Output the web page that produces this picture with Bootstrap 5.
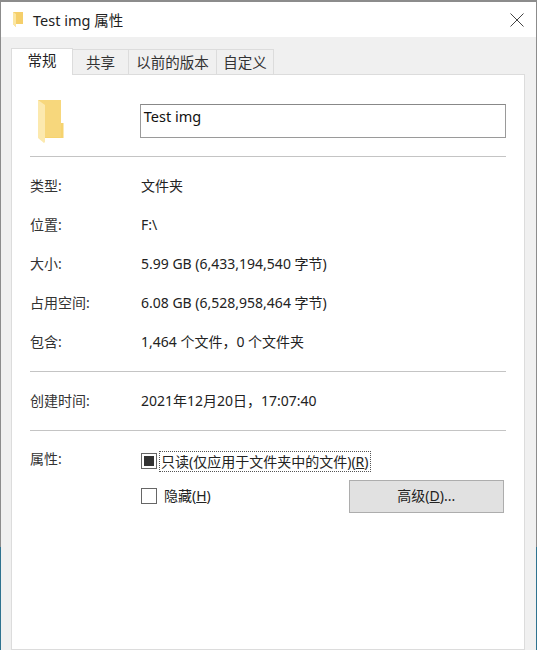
<!DOCTYPE html>
<html lang="zh-CN">
<head>
<meta charset="utf-8">
<title>Test img 属性</title>
<link rel="stylesheet" href="https://cdn.jsdelivr.net/npm/bootstrap@5.3.0/dist/css/bootstrap.min.css">
<style>
html,body{height:650px;overflow:hidden;margin:0;background:#fff}
body{font-family:"Noto Sans","Noto Sans CJK SC",sans-serif;font-size:14px;color:#222;line-height:20px}
.win-frame{width:537px;height:650px;padding:2px 1px 0 1px;background:linear-gradient(to bottom,#8c8c8c 0,#8c8c8c 547px,#2f7390 547px,#2f7390 650px)}
.win-inner{height:648px;background:#f0f0f0}
.title-bar{height:35px;background:#fff;padding-left:11px}
.title-text{font-size:14.5px;margin-left:9px;color:#222}
.close-x{margin-right:12px}
.tab-strip{height:37px;padding:11px 0 0 10px;align-items:flex-end}
.tab-item{height:25px;background:#f0f0f0;border:1px solid #dcdcdc;border-bottom:0;border-left:0;color:#333;font-size:14.5px;text-align:center;line-height:24px}
.tab-on{height:27px;width:62px;background:#fff;border:1px solid #dcdcdc;border-bottom:0;color:#222;position:relative;top:1px;line-height:23px;z-index:1}
.panel-box{margin:0 11px 0 10px;height:576px;background:#fff;border:1px solid #dcdcdc;padding:0 18px}
.head-row{height:81px}
.folder-cell{width:110px;padding-left:7px;padding-top:24px}
.name-box{width:367px;height:34px;margin-top:29px;border:1px solid #9a9a9a;border-top-color:#888;padding:1px 3px;font-size:14.5px;color:#111}
.rule-line{height:1px;border-top:1px solid #c4c4c4;opacity:1;margin:0}
.info-row{height:39px;align-items:center}
.info-key{width:111px;color:#333}
.info-val{color:#222}
.rows-top{padding-top:9px;padding-bottom:10px}
.rows-one{padding:9px 0 10px}
.attr-wrap{padding-top:9px}
.attr-key{width:111px;padding-top:9px;color:#333}
.attr-check{width:16px;height:16px;border:1px solid #666;background:#fff;flex:none;margin-right:3px;display:flex;align-items:center;justify-content:center}
.attr-check i{display:block;width:10px;height:10px;background:#333}
.attr-focus{outline:1px dotted #555;outline-offset:0;padding:0 1px;white-space:nowrap;line-height:19px;color:#222}
.attr-line{height:20px;margin-top:11px}
.attr-line2{margin-top:9px;height:32px}
.adv-btn{width:155px;height:33px;margin-left:138px;background:#e1e1e1;border:1px solid #adadad;border-radius:0;color:#222;font-size:14px;padding:0;line-height:30px}
.adv-btn:hover{background:#e1e1e1;border-color:#adadad;color:#222}
u{text-underline-offset:1px}
</style>
</head>
<body>
<div class="win-frame">
  <div class="win-inner d-flex flex-column">
    <div class="title-bar d-flex align-items-center">
      <svg width="12" height="17" viewBox="0 0 12 17"><path d="M1 1h10v12H4v3L1 13z" fill="#f5cf6b"/><path d="M1 1l3 2v13l-3-3z" fill="#fbe6a2"/></svg>
      <span class="title-text">Test img 属性</span>
      <svg class="close-x ms-auto" width="14" height="14" viewBox="0 0 14 14"><path d="M.5.5l13 13M13.5.5l-13 13" stroke="#444" stroke-width="1" fill="none"/></svg>
    </div>
    <div class="tab-strip d-flex">
      <div class="tab-item tab-on">常规</div>
      <div class="tab-item" style="width:56px">共享</div>
      <div class="tab-item" style="width:88px">以前的版本</div>
      <div class="tab-item" style="width:57px">自定义</div>
    </div>
    <div class="panel-box">
      <div class="head-row d-flex">
        <div class="folder-cell">
          <svg width="28" height="46" viewBox="0 0 28 46"><path d="M1 1h23v23h2.500v15H7v5z" fill="#f6d36f"/><path d="M1 1h23v37H7z" fill="#f8da85" opacity=".6"/><path d="M1 1l7 5v37l-1 1-6-5z" fill="#fce9ae"/></svg>
        </div>
        <div class="name-box">Test img</div>
      </div>
      <hr class="rule-line">
      <div class="rows-top">
        <div class="info-row d-flex"><div class="info-key">类型:</div><div class="info-val">文件夹</div></div>
        <div class="info-row d-flex"><div class="info-key">位置:</div><div class="info-val">F:\</div></div>
        <div class="info-row d-flex"><div class="info-key">大小:</div><div class="info-val">5.99 GB (6,433,194,540 字节)</div></div>
        <div class="info-row d-flex"><div class="info-key">占用空间:</div><div class="info-val">6.08 GB (6,528,958,464 字节)</div></div>
        <div class="info-row d-flex"><div class="info-key">包含:</div><div class="info-val">1,464 个文件，0 个文件夹</div></div>
      </div>
      <hr class="rule-line">
      <div class="rows-one">
        <div class="info-row d-flex"><div class="info-key">创建时间:</div><div class="info-val">2021年12月20日，17:07:40</div></div>
      </div>
      <hr class="rule-line">
      <div class="d-flex attr-wrap">
        <div class="attr-key">属性:</div>
        <div>
          <div class="attr-line d-flex align-items-center">
            <span class="attr-check"><i></i></span>
            <span class="attr-focus">只读(仅应用于文件夹中的文件)(<u>R</u>)</span>
          </div>
          <div class="attr-line2 d-flex align-items-center">
            <span class="attr-check"></span>
            <span class="ms-1">隐藏(<u>H</u>)</span>
            <button type="button" class="btn adv-btn">高级(<u>D</u>)...</button>
          </div>
        </div>
      </div>
    </div>
  </div>
</div>
</body>
</html>
